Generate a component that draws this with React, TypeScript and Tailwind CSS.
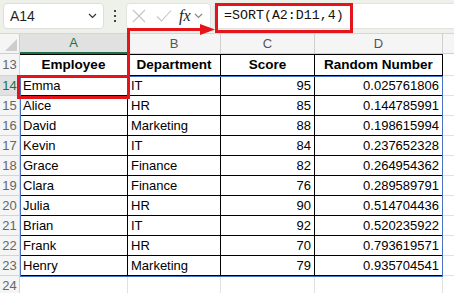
import * as React from "react";

type Row = { name: string; dept: string; score: number; rand: string };

const data: Row[] = [
  { name: "Emma", dept: "IT", score: 95, rand: "0.025761806" },
  { name: "Alice", dept: "HR", score: 85, rand: "0.144785991" },
  { name: "David", dept: "Marketing", score: 88, rand: "0.198615994" },
  { name: "Kevin", dept: "IT", score: 84, rand: "0.237652328" },
  { name: "Grace", dept: "Finance", score: 82, rand: "0.264954362" },
  { name: "Clara", dept: "Finance", score: 76, rand: "0.289589791" },
  { name: "Julia", dept: "HR", score: 90, rand: "0.514704436" },
  { name: "Brian", dept: "IT", score: 92, rand: "0.520235922" },
  { name: "Frank", dept: "HR", score: 70, rand: "0.793619571" },
  { name: "Henry", dept: "Marketing", score: 79, rand: "0.935704541" },
];

const Chevron = ({ className }: { className?: string }) => (
  <svg width="9" height="6" viewBox="0 0 9 6" className={className}>
    <path d="M1 1 L4.5 4.5 L8 1" fill="none" stroke="currentColor" strokeWidth="1.2" />
  </svg>
);

const Toolbar = () => (
  <div className="h-[34px] bg-[#edf1ea] flex items-start pt-[3px] pl-[3px] border-b border-[#d6d6d6]">
    {/* name box */}
    <div className="w-[101px] h-[26px] bg-white rounded-[4px] border border-[#dedede] flex items-center justify-between pl-[6px] pr-[6px]">
      <span className="text-[14px] text-[#1f1f1f]">A14</span>
      <Chevron className="text-[#333]" />
    </div>
    {/* more dots */}
    <div className="w-[22px] h-[26px] flex flex-col items-center justify-center gap-[3px]">
      <span className="w-[2px] h-[2px] bg-[#444]" />
      <span className="w-[2px] h-[2px] bg-[#444]" />
      <span className="w-[2px] h-[2px] bg-[#444]" />
    </div>
    {/* cancel / enter / fx */}
    <div className="w-[85px] h-[26px] bg-white rounded-[4px] border border-[#e2e2e2] flex items-center pl-[5px]">
      <svg width="14" height="14" viewBox="0 0 14 14" className="text-[#c4c4c4]">
        <path d="M1 1 L13 13 M13 1 L1 13" stroke="currentColor" strokeWidth="1.1" />
      </svg>
      <svg width="16" height="14" viewBox="0 0 16 14" className="ml-[10px] text-[#c4c4c4]">
        <path d="M1 7.5 L5.5 12 L15 1.5" fill="none" stroke="currentColor" strokeWidth="1.1" />
      </svg>
      <span className="ml-[7px] text-[16px] italic text-[#222] leading-none" style={{ fontFamily: '"Liberation Serif", serif' }}>
        fx
      </span>
      <Chevron className="ml-[3px] text-[#888]" />
    </div>
    {/* formula input */}
    <div className="flex-1 ml-[3px] h-[26px] bg-white border border-[#e2e2e2] border-r-0 rounded-l-[4px] flex items-center pl-[9px]">
      <span className="text-[13.3px] text-[#111]" style={{ fontFamily: '"Liberation Mono", monospace' }}>
        =SORT(A2:D11,4)
      </span>
    </div>
  </div>
);

const cols = ["A", "B", "C", "D", ""];

const ColumnHeader = () => (
  <div className="flex h-[20px] bg-[#f5f5f5]">
    <div className="w-[20px] relative border-r border-b border-[#cfcfcf]">
      <svg width="12" height="12" viewBox="0 0 12 12" className="absolute right-[2px] bottom-[2px]">
        <path d="M12 0 L12 12 L0 12 Z" fill="#cdcdcd" />
      </svg>
    </div>
    {cols.map((c, i) => (
      <div
        key={i}
        className={
          i === 0
            ? "w-[108px] bg-[#e1e1e1] border-r border-[#cfcfcf] border-b-2 border-b-[#1e7145] text-[#1e7145] flex items-center justify-center text-[13px]"
            : i === 1
            ? "w-[93px] border-r border-b border-[#cfcfcf] text-[#555] flex items-center justify-center text-[13px]"
            : i === 2
            ? "w-[94px] border-r border-b border-[#cfcfcf] text-[#555] flex items-center justify-center text-[13px]"
            : i === 3
            ? "w-[128px] border-r border-b border-[#cfcfcf] text-[#555] flex items-center justify-center text-[13px]"
            : "flex-1 border-b border-[#cfcfcf]"
        }
      >
        {c}
      </div>
    ))}
  </div>
);

const RowHead = ({ n, active }: { n: number; active?: boolean }) => (
  <div
    className={`w-[20px] flex items-center justify-center text-[13px] border-r border-b border-[#d4d4d4] ${
      active ? "bg-[#e1e1e1] text-[#1e7145]" : "bg-[#f5f5f5] text-[#666]"
    }`}
  >
    {n}
  </div>
);

export default function App() {
  return (
    <div
      className="relative w-[454px] h-[293px] overflow-hidden bg-white"
      style={{ fontFamily: '"Liberation Sans", Arial, sans-serif' }}
    >
      <Toolbar />
      <ColumnHeader />

      {/* header row 13 */}
      <div className="flex h-[22px]">
        <RowHead n={13} />
        <div className="w-[108px] border-t border-r border-b border-black flex items-center justify-center font-bold text-[13.5px]">
          Employee
        </div>
        <div className="w-[93px] border-t border-r border-b border-black flex items-center justify-center font-bold text-[13.5px]">
          Department
        </div>
        <div className="w-[94px] border-t border-r border-b border-black flex items-center justify-center font-bold text-[13.5px]">
          Score
        </div>
        <div className="w-[128px] border-t border-r border-b border-black flex items-center justify-center font-bold text-[13.5px]">
          Random Number
        </div>
        <div className="flex-1 border-b border-[#e1e1e1]" />
      </div>

      {data.map((r, i) => (
        <div key={r.name} className="flex h-[20px] text-[13px] text-black">
          <RowHead n={14 + i} active={i === 0} />
          <div className="w-[108px] border-r border-b border-black flex items-center pl-[3px]">{r.name}</div>
          <div className="w-[93px] border-r border-b border-black flex items-center pl-[3px]">{r.dept}</div>
          <div className="w-[94px] border-r border-b border-black flex items-center justify-end pr-[3px]">{r.score}</div>
          <div className="w-[128px] border-r border-b border-black flex items-center justify-end pr-[3px]">{r.rand}</div>
          <div className="flex-1 border-b border-[#e1e1e1]" />
        </div>
      ))}

      {/* row 24 */}
      <div className="flex h-[20px]">
        <RowHead n={24} />
        <div className="w-[108px] border-r border-[#e1e1e1]" />
        <div className="w-[93px] border-r border-[#e1e1e1]" />
        <div className="w-[94px] border-r border-[#e1e1e1]" />
        <div className="w-[128px] border-r border-[#e1e1e1]" />
        <div className="flex-1" />
      </div>

      {/* spill range outline and red callouts */}
      <svg className="absolute inset-0 pointer-events-none" width="454" height="293" viewBox="0 0 454 293">
        <rect x="20.5" y="76.5" width="422" height="200" fill="none" stroke="#4a72c4" strokeWidth="1" />
        <rect x="216.5" y="4.5" width="135" height="27" fill="none" stroke="#e5141b" strokeWidth="3" />
        <rect x="18.5" y="76.5" width="110" height="21" fill="none" stroke="#e5141b" strokeWidth="3" />
        <path d="M128.5 76 L128.5 29.5 L203 29.5" fill="none" stroke="#e5141b" strokeWidth="3" />
        <path d="M200 24 L215 29.5 L200 35 Z" fill="#e5141b" />
      </svg>
    </div>
  );
}
